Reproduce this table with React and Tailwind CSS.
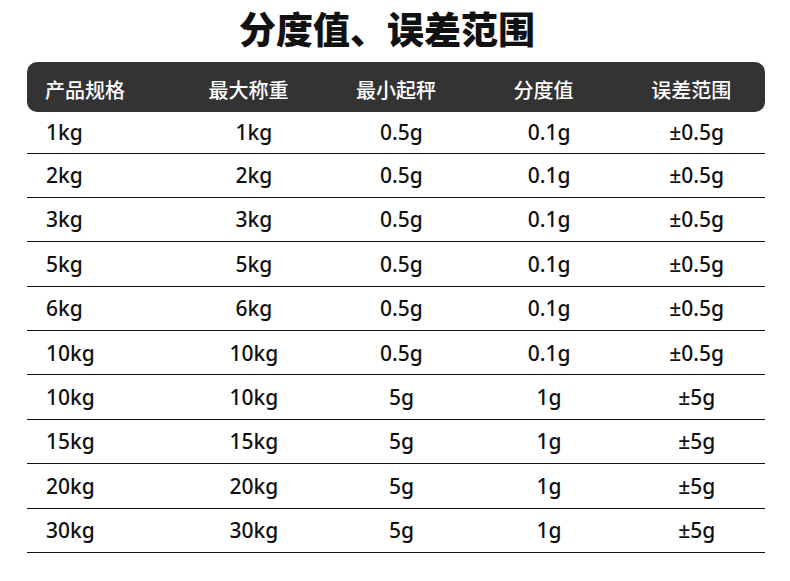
import React from "react";

const rows = [
  ["1kg", "1kg", "0.5g", "0.1g", "±0.5g"],
  ["2kg", "2kg", "0.5g", "0.1g", "±0.5g"],
  ["3kg", "3kg", "0.5g", "0.1g", "±0.5g"],
  ["5kg", "5kg", "0.5g", "0.1g", "±0.5g"],
  ["6kg", "6kg", "0.5g", "0.1g", "±0.5g"],
  ["10kg", "10kg", "0.5g", "0.1g", "±0.5g"],
  ["10kg", "10kg", "5g", "1g", "±5g"],
  ["15kg", "15kg", "5g", "1g", "±5g"],
  ["20kg", "20kg", "5g", "1g", "±5g"],
  ["30kg", "30kg", "5g", "1g", "±5g"]
];

const headers = ["产品规格", "最大称重", "最小起秤", "分度值", "误差范围"];

const cjk = "font-['Noto_Sans_CJK_SC','Noto_Sans',sans-serif]";

export default function App() {
  return (
    <div className="w-[790px] h-[581px] bg-white overflow-hidden">
      <div
        className={`h-[62px] flex items-center justify-center pr-[16px] pb-[4px] text-[37px] font-black text-[#111] ${cjk}`}
      >
        分度值、误差范围
      </div>
      <div className="ml-[27px] w-[738px]">
        <div
          className={`h-[50px] rounded-[10px] bg-[#333333] grid grid-cols-5 items-center pt-[5px] text-white text-[20px] font-medium ${cjk}`}
        >
          {headers.map((h, i) => (
            <div key={i} className={i === 0 ? "pl-[18px]" : "text-center"}>
              {h}
            </div>
          ))}
        </div>
        {rows.map((r, ri) => (
          <div
            key={ri}
            className={`${
              ri === 0 ? "h-[41.5px]" : "h-[44.4px]"
            } grid grid-cols-5 items-center pt-[1px] border-b-[1.5px] border-[#111] text-[21px] font-medium text-[#111] font-['Noto_Sans',sans-serif]`}
          >
            {r.map((c, ci) => (
              <div
                key={ci}
                className={ci === 0 ? "pl-[19px]" : "text-center pl-[11px]"}
              >
                {c}
              </div>
            ))}
          </div>
        ))}
      </div>
    </div>
  );
}
